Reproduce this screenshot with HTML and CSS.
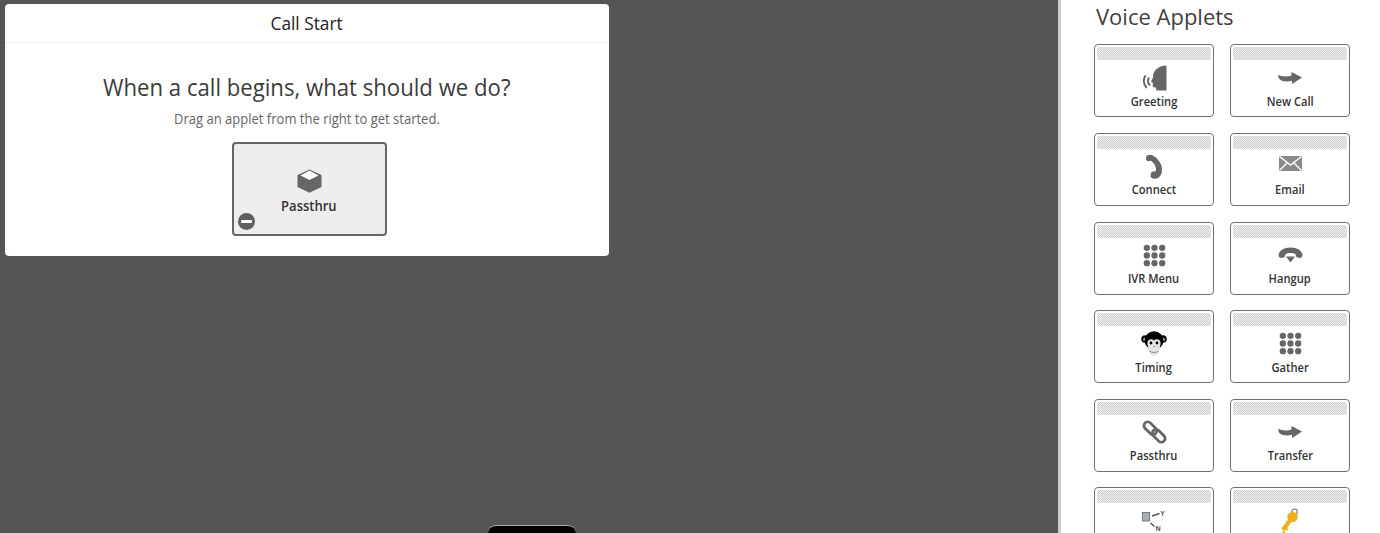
FILE: index.html
```html
<!DOCTYPE html>
<html lang="en">
<head>
<meta charset="utf-8">
<title>Flow editor</title>
<link rel="stylesheet" href="styles.css">
</head>
<body>
<svg class="defs" width="0" height="0" aria-hidden="true">
  <defs>
    <symbol id="i-arrow" viewBox="0 0 26 13">
      <path d="M0 3C4 5 9 5.500 14.500 4L14.500 0 26 6 15.500 13 15 9.500C9 11 3 10 1 7Z"/>
    </symbol>
    <symbol id="i-keypad" viewBox="0 0 24 24">
      <circle cx="4" cy="4" r="3.300"/><circle cx="12" cy="4" r="3.300"/><circle cx="20" cy="4" r="3.300"/>
      <circle cx="4" cy="12" r="3.300"/><circle cx="12" cy="12" r="3.300"/><circle cx="20" cy="12" r="3.300"/>
      <circle cx="4" cy="20" r="3.300"/><circle cx="12" cy="20" r="3.300"/><circle cx="20" cy="20" r="3.300"/>
    </symbol>
  </defs>
</svg>
<div class="app">
  <main class="canvas">
    <section class="panel">
      <header class="panel-head"><span class="panel-title">Call Start</span></header>
      <div class="panel-body">
        <h1 class="prompt">When a call begins, what should we do?</h1>
        <p class="hint">Drag an applet from the right to get started.</p>
        <div class="dropped">
          <svg class="cube" viewBox="0 0 25 24" aria-hidden="true">
            <path class="ink" d="M12.500 0.500 24.500 6V18L12.500 23.800 0.500 18V6Z"/>
            <path class="cube-top" d="M12.500 1.500 21.500 6.500 12.500 11 3.500 6.500Z"/>
          </svg>
          <span class="dropped-name">Passthru</span>
          <span class="remove"></span>
        </div>
      </div>
    </section>
    <div class="tab"></div>
  </main>
  <aside class="sidebar">
    <h2 class="side-title">Voice Applets</h2>
    <div class="applets">
      <div class="applet"><div class="grip"></div><div class="glyph">
        <svg width="26" height="26" viewBox="0 0 26 26" aria-hidden="true"><path class="ink" d="M25.500 0.500V25.500H15.500L14.800 22.500C12.500 22.800 11.300 21.500 11.800 19.800L11.800 17.800 10 16.500 12 12.500C11.500 6 17 0.800 25.500 0.500Z"/><path class="wave" d="M8 12.500C6.500 15 6.800 18 9 20.500M4.500 10.500C2 14.500 2.300 19 5.800 23"/></svg>
      </div><span class="applet-name">Greeting</span></div>
      <div class="applet"><div class="grip"></div><div class="glyph">
        <svg class="ink" width="24" height="12" aria-hidden="true"><use href="#i-arrow"/></svg>
      </div><span class="applet-name">New Call</span></div>
      <div class="applet"><div class="grip"></div><div class="glyph">
        <svg width="18" height="25" viewBox="0 0 18 25" aria-hidden="true"><path class="ink" d="M1 3C2 0.800 5 0 7.500 1.300 12.500 4 17 9.500 17 16 17 21 14 24.500 10 24.800 7.500 25 5.500 23.500 5.500 22L6 19C6.300 17.800 7.500 17.300 9 17.500 10.300 17.700 11 16.800 11 15.500 11 12 8.500 8 5.500 6.800 4 7.500 2 7.300 1.300 6Z"/></svg>
      </div><span class="applet-name">Connect</span></div>
      <div class="applet"><div class="grip"></div><div class="glyph glyph-mail">
        <svg width="23" height="15" viewBox="0 0 23 15" aria-hidden="true"><rect class="mail-bg" width="23" height="15"/><path class="mail-line" d="M0.500 0.500 11.500 9 22.500 0.500M0.500 14.500 8.500 6.500M22.500 14.500 14.500 6.500"/></svg>
      </div><span class="applet-name">Email</span></div>
      <div class="applet"><div class="grip"></div><div class="glyph">
        <svg class="ink" width="23" height="23" aria-hidden="true"><use href="#i-keypad"/></svg>
      </div><span class="applet-name">IVR Menu</span></div>
      <div class="applet"><div class="grip"></div><div class="glyph">
        <svg width="25" height="16" viewBox="0 0 25 16" aria-hidden="true"><path class="ink" d="M0.500 8C1 3.500 6 0.500 12.500 0.500S24 3.500 24.500 8C24.500 10.500 22 11.500 19.500 10.500L18 9.500 17.500 7C15 5.500 10 5.500 7.500 7L7 9.500 5.500 10.500C3 11.500 0.500 10.500 0.500 8ZM8 9.500H17L12.500 15.500Z"/></svg>
      </div><span class="applet-name">Hangup</span></div>
      <div class="applet"><div class="grip"></div><div class="glyph">
        <svg width="26" height="25" viewBox="0 0 26 25" aria-hidden="true">
          <circle cx="4" cy="8" r="3.800" fill="#111"/><circle cx="22" cy="8" r="3.800" fill="#111"/>
          <circle cx="4" cy="8.500" r="1.700" fill="#ccc"/><circle cx="22" cy="8.500" r="1.700" fill="#ccc"/>
          <ellipse cx="13" cy="9.500" rx="9.500" ry="9.200" fill="#000"/>
          <path d="M6.500 11C7.500 7.500 11 7.500 13 9.500 15 7.500 18.500 7.500 19.500 11 20 14 18.500 15.500 18.800 18 18.300 22 16 24.800 13 24.800S7.700 22 7.200 18C7.500 15.500 6 14 6.500 11Z" fill="#e4e4e4"/>
          <circle cx="10" cy="12" r="1.400" fill="#000"/><circle cx="16" cy="12" r="1.400" fill="#000"/>
          <path class="monkey-line" d="M8.500 20C11 22 15 22 17.500 20M12 15.500H14"/>
        </svg>
      </div><span class="applet-name">Timing</span></div>
      <div class="applet"><div class="grip"></div><div class="glyph">
        <svg class="ink" width="23" height="23" aria-hidden="true"><use href="#i-keypad"/></svg>
      </div><span class="applet-name">Gather</span></div>
      <div class="applet"><div class="grip"></div><div class="glyph">
        <svg width="25" height="24" viewBox="0 0 25 24" aria-hidden="true"><rect class="link" x="1" y="4.500" width="15" height="7.500" rx="3.750" transform="rotate(45 8.500 8)"/><rect class="link" x="9" y="12" width="15" height="7.500" rx="3.750" transform="rotate(45 16.500 16)"/></svg>
      </div><span class="applet-name">Passthru</span></div>
      <div class="applet"><div class="grip"></div><div class="glyph">
        <svg class="ink" width="24" height="12" aria-hidden="true"><use href="#i-arrow"/></svg>
      </div><span class="applet-name">Transfer</span></div>
      <div class="applet"><div class="grip"></div><div class="glyph">
        <svg width="24" height="21" viewBox="0 0 24 21" aria-hidden="true"><rect x="0.500" y="2.500" width="7" height="8.500" fill="#a8b0ba" stroke="#777"/><path class="tree" d="M10 6 17.500 3.500M8.500 13 12.500 16.500"/><text class="tree-y" x="18.500" y="5.500">Y</text><text class="tree-y" x="13.500" y="20.500">N</text></svg>
      </div></div>
      <div class="applet"><div class="grip"></div><div class="glyph">
        <svg width="20" height="26" viewBox="0 0 20 26" aria-hidden="true"><circle cx="14.500" cy="4" r="2.800" fill="none" stroke="#888" stroke-width="1.300"/><circle cx="12.500" cy="9" r="5.300" fill="#eab31f"/><path class="key-shaft" d="M11 11 3 22"/><path class="key-tooth" d="M5 20 8 22M2.500 23.500 5 25"/></svg>
      </div></div>
    </div>
  </aside>
</div>
</body>
</html>
```
FILE: styles.css
```css
* { box-sizing: border-box; }
html, body { margin: 0; height: 100%; overflow: hidden; }
body { font-family: "Open Sans", "Liberation Sans", sans-serif; color: #333; background: #555; }
.defs { position: absolute; }
.ink { fill: #666; }

.app { display: flex; height: 533px; overflow: hidden; }
.canvas { position: relative; width: 1058px; flex: none; overflow: hidden; padding: 4px 0 0 5px; background: #555; }

.panel { width: 604px; height: 252px; background: #fff; border-radius: 4px; }
.panel-head { height: 39px; line-height: 39px; border-bottom: 1px solid #eee; text-align: center; }
.panel-title { display: inline-block; font-size: 18px; color: #222; transform: scaleX(.96); }
.panel-body { display: flex; flex-direction: column; align-items: center; padding-top: 24px; }
.prompt { margin: 0; font-size: 24px; line-height: 40px; font-weight: 400; color: #3c3c3c; transform: scaleX(.923); }
.hint { margin: 2px 0 0; font-size: 14px; line-height: 20px; color: #666; transform: scaleX(.93); }

.dropped { position: relative; display: flex; flex-direction: column; align-items: center; width: 155px; height: 94px; margin: 13px 0 0 4px; padding-top: 25px; background: #eee; border: 2px solid #666; border-radius: 4px; }
.cube { width: 25px; height: 24px; display: block; }
.cube-top { fill: #fff; }
.dropped-name { margin-top: 3px; font-size: 14px; line-height: 20px; font-weight: 600; color: #333; transform: scaleX(.93); }
.remove { position: absolute; left: 4px; bottom: 4px; width: 17px; height: 17px; border-radius: 50%; background: #5f5f5f; }
.remove::after { content: ""; position: absolute; left: 3px; top: 7px; width: 11px; height: 3px; background: #fff; border-radius: 1px; }

.tab { position: absolute; left: 488px; bottom: 0; width: 88px; height: 8px; background: #000; border-top: 1px solid #aaa; border-radius: 8px 8px 0 0; }

.sidebar { flex: 1; min-width: 0; height: 533px; overflow: hidden; padding: 0 30px 0 33px; background: #fff; border-left: 3px solid #ccc; }
.side-title { margin: 1px 0 0; padding-left: 2px; font-size: 22px; line-height: 30px; font-weight: 400; color: #3f3f3f; }
.applets { display: grid; grid-template-columns: 120px 120px; column-gap: 16px; grid-auto-rows: 73px; row-gap: 15.6px; margin-top: 13.4px; }
.applet { display: flex; flex-direction: column; align-items: center; padding: 2px; background: #fff; border: 1px solid #707070; border-radius: 4px; }
.grip { flex: none; width: 100%; height: 13px; border-radius: 2px; background: repeating-conic-gradient(#d2d2d2 0 25%, #ececec 0 50%) 0 0 / 2px 2px; }
.glyph { flex: none; display: flex; align-items: center; justify-content: center; height: 30px; margin-top: 2.5px; }
.glyph-mail svg { margin-bottom: 6px; }
.applet-name { font-size: 12px; line-height: 18px; font-weight: 600; color: #333; white-space: nowrap; transform: scaleX(.93); }

.wave { fill: none; stroke: #666; stroke-width: 1.900; }
.mail-bg { fill: #8a8a8a; }
.mail-line { fill: none; stroke: #fff; stroke-width: 1.400; }
.monkey-line { fill: none; stroke: #777; stroke-width: 0.800; }
.link { fill: none; stroke: #666; stroke-width: 2.800; }
.tree { fill: none; stroke: #555; stroke-width: 1.500; }
.tree-y { font-size: 6.500px; font-weight: 700; fill: #555; font-family: "Open Sans", sans-serif; }
.key-shaft { fill: none; stroke: #eab31f; stroke-width: 4.500; }
.key-tooth { fill: none; stroke: #eab31f; stroke-width: 2; }
```
